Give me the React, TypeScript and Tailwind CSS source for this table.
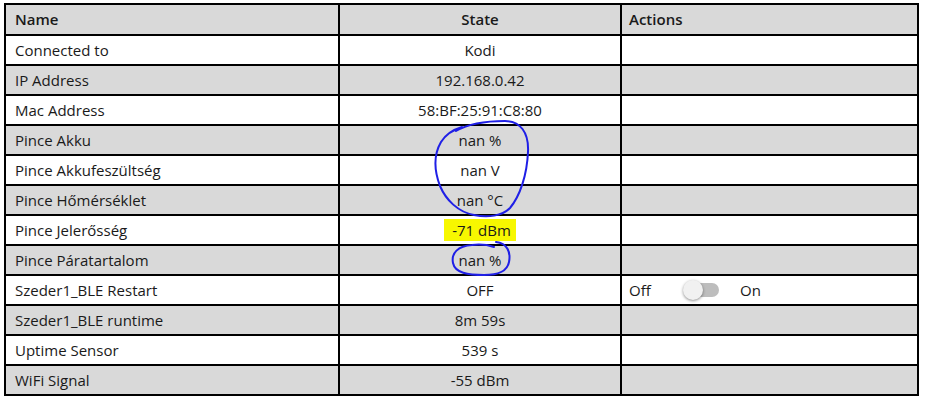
const rows: { name: string; state: string; toggle?: boolean }[] = [
  { name: "Connected to", state: "Kodi" },
  { name: "IP Address", state: "192.168.0.42" },
  { name: "Mac Address", state: "58:BF:25:91:C8:80" },
  { name: "Pince Akku", state: "nan %" },
  { name: "Pince Akkufeszültség", state: "nan V" },
  { name: "Pince Hőmérséklet", state: "nan °C" },
  { name: "Pince Jelerősség", state: "-71 dBm" },
  { name: "Pince Páratartalom", state: "nan %" },
  { name: "Szeder1_BLE Restart", state: "OFF", toggle: true },
  { name: "Szeder1_BLE runtime", state: "8m 59s" },
  { name: "Uptime Sensor", state: "539 s" },
  { name: "WiFi Signal", state: "-55 dBm" },
];

function Toggle() {
  return (
    <div className="flex items-center">
      <span className="w-[54px]">Off</span>
      <span className="relative flex h-[20px] w-[38px] items-center">
        <span className="ml-[4px] h-[14px] w-[32px] rounded-full bg-[#bdbdbd]" />
        <span className="absolute left-0 top-0 h-[20px] w-[20px] rounded-full bg-[#f1f1f1] shadow-[0_1px_3px_rgba(0,0,0,0.45)]" />
      </span>
      <span className="ml-[19px]">On</span>
    </div>
  );
}

function Annotations() {
  return (
    <svg className="pointer-events-none absolute left-0 top-0" width="931" height="413" viewBox="0 0 931 413">
      <path
        d="M456 131 C 468 124, 488 121, 505 121 C 520 121, 529 132, 528 152 C 527 175, 520 196, 510 208 C 502 216, 488 218, 474 215 C 458 212, 446 200, 440 186 C 434 170, 434 154, 441 142 C 446 134, 452 130, 462 127"
        fill="none"
        stroke="#1f1fe6"
        strokeWidth="2"
        strokeLinecap="round"
      />
      <path
        d="M496 242 C 507 243, 511 252, 509 262 C 507 272, 498 275, 484 275 C 468 275, 455 273, 453 263 C 451 253, 458 246, 472 245 C 480 244, 488 245, 494 247"
        fill="none"
        stroke="#1f1fe6"
        strokeWidth="2"
        strokeLinecap="round"
      />
    </svg>
  );
}

export default function App() {
  return (
    <div className="relative h-[413px] w-[931px] bg-white pl-[4px] pt-[3px] font-['Open_Sans',sans-serif] text-[15px] text-[#1a1a1a]">
      <table className="w-[915px] table-fixed border-collapse border-2 border-black">
        <colgroup>
          <col className="w-[334px]" />
          <col className="w-[282px]" />
          <col />
        </colgroup>
        <thead>
          <tr className="h-[31px] bg-[#d9d9d9]">
            <th className="border-2 border-black px-[9px] text-left font-semibold">Name</th>
            <th className="border-2 border-black text-center font-semibold">State</th>
            <th className="border-2 border-black px-[7px] text-left font-semibold">Actions</th>
          </tr>
        </thead>
        <tbody>
          {rows.map((r, i) => (
            <tr key={r.name} className={`h-[30px] ${i % 2 === 1 ? "bg-[#d9d9d9]" : "bg-white"}`}>
              <td className="border-2 border-black px-[9px]">{r.name}</td>
              <td className="border-2 border-black text-center">
                {r.state === "-71 dBm" ? (
                  <span className="bg-[#f7f700] py-[1px] pl-[8px] pr-[5px]">{r.state}</span>
                ) : (
                  r.state
                )}
              </td>
              <td className="border-2 border-black px-[7px]">{r.toggle ? <Toggle /> : null}</td>
            </tr>
          ))}
        </tbody>
      </table>
      <Annotations />
    </div>
  );
}
